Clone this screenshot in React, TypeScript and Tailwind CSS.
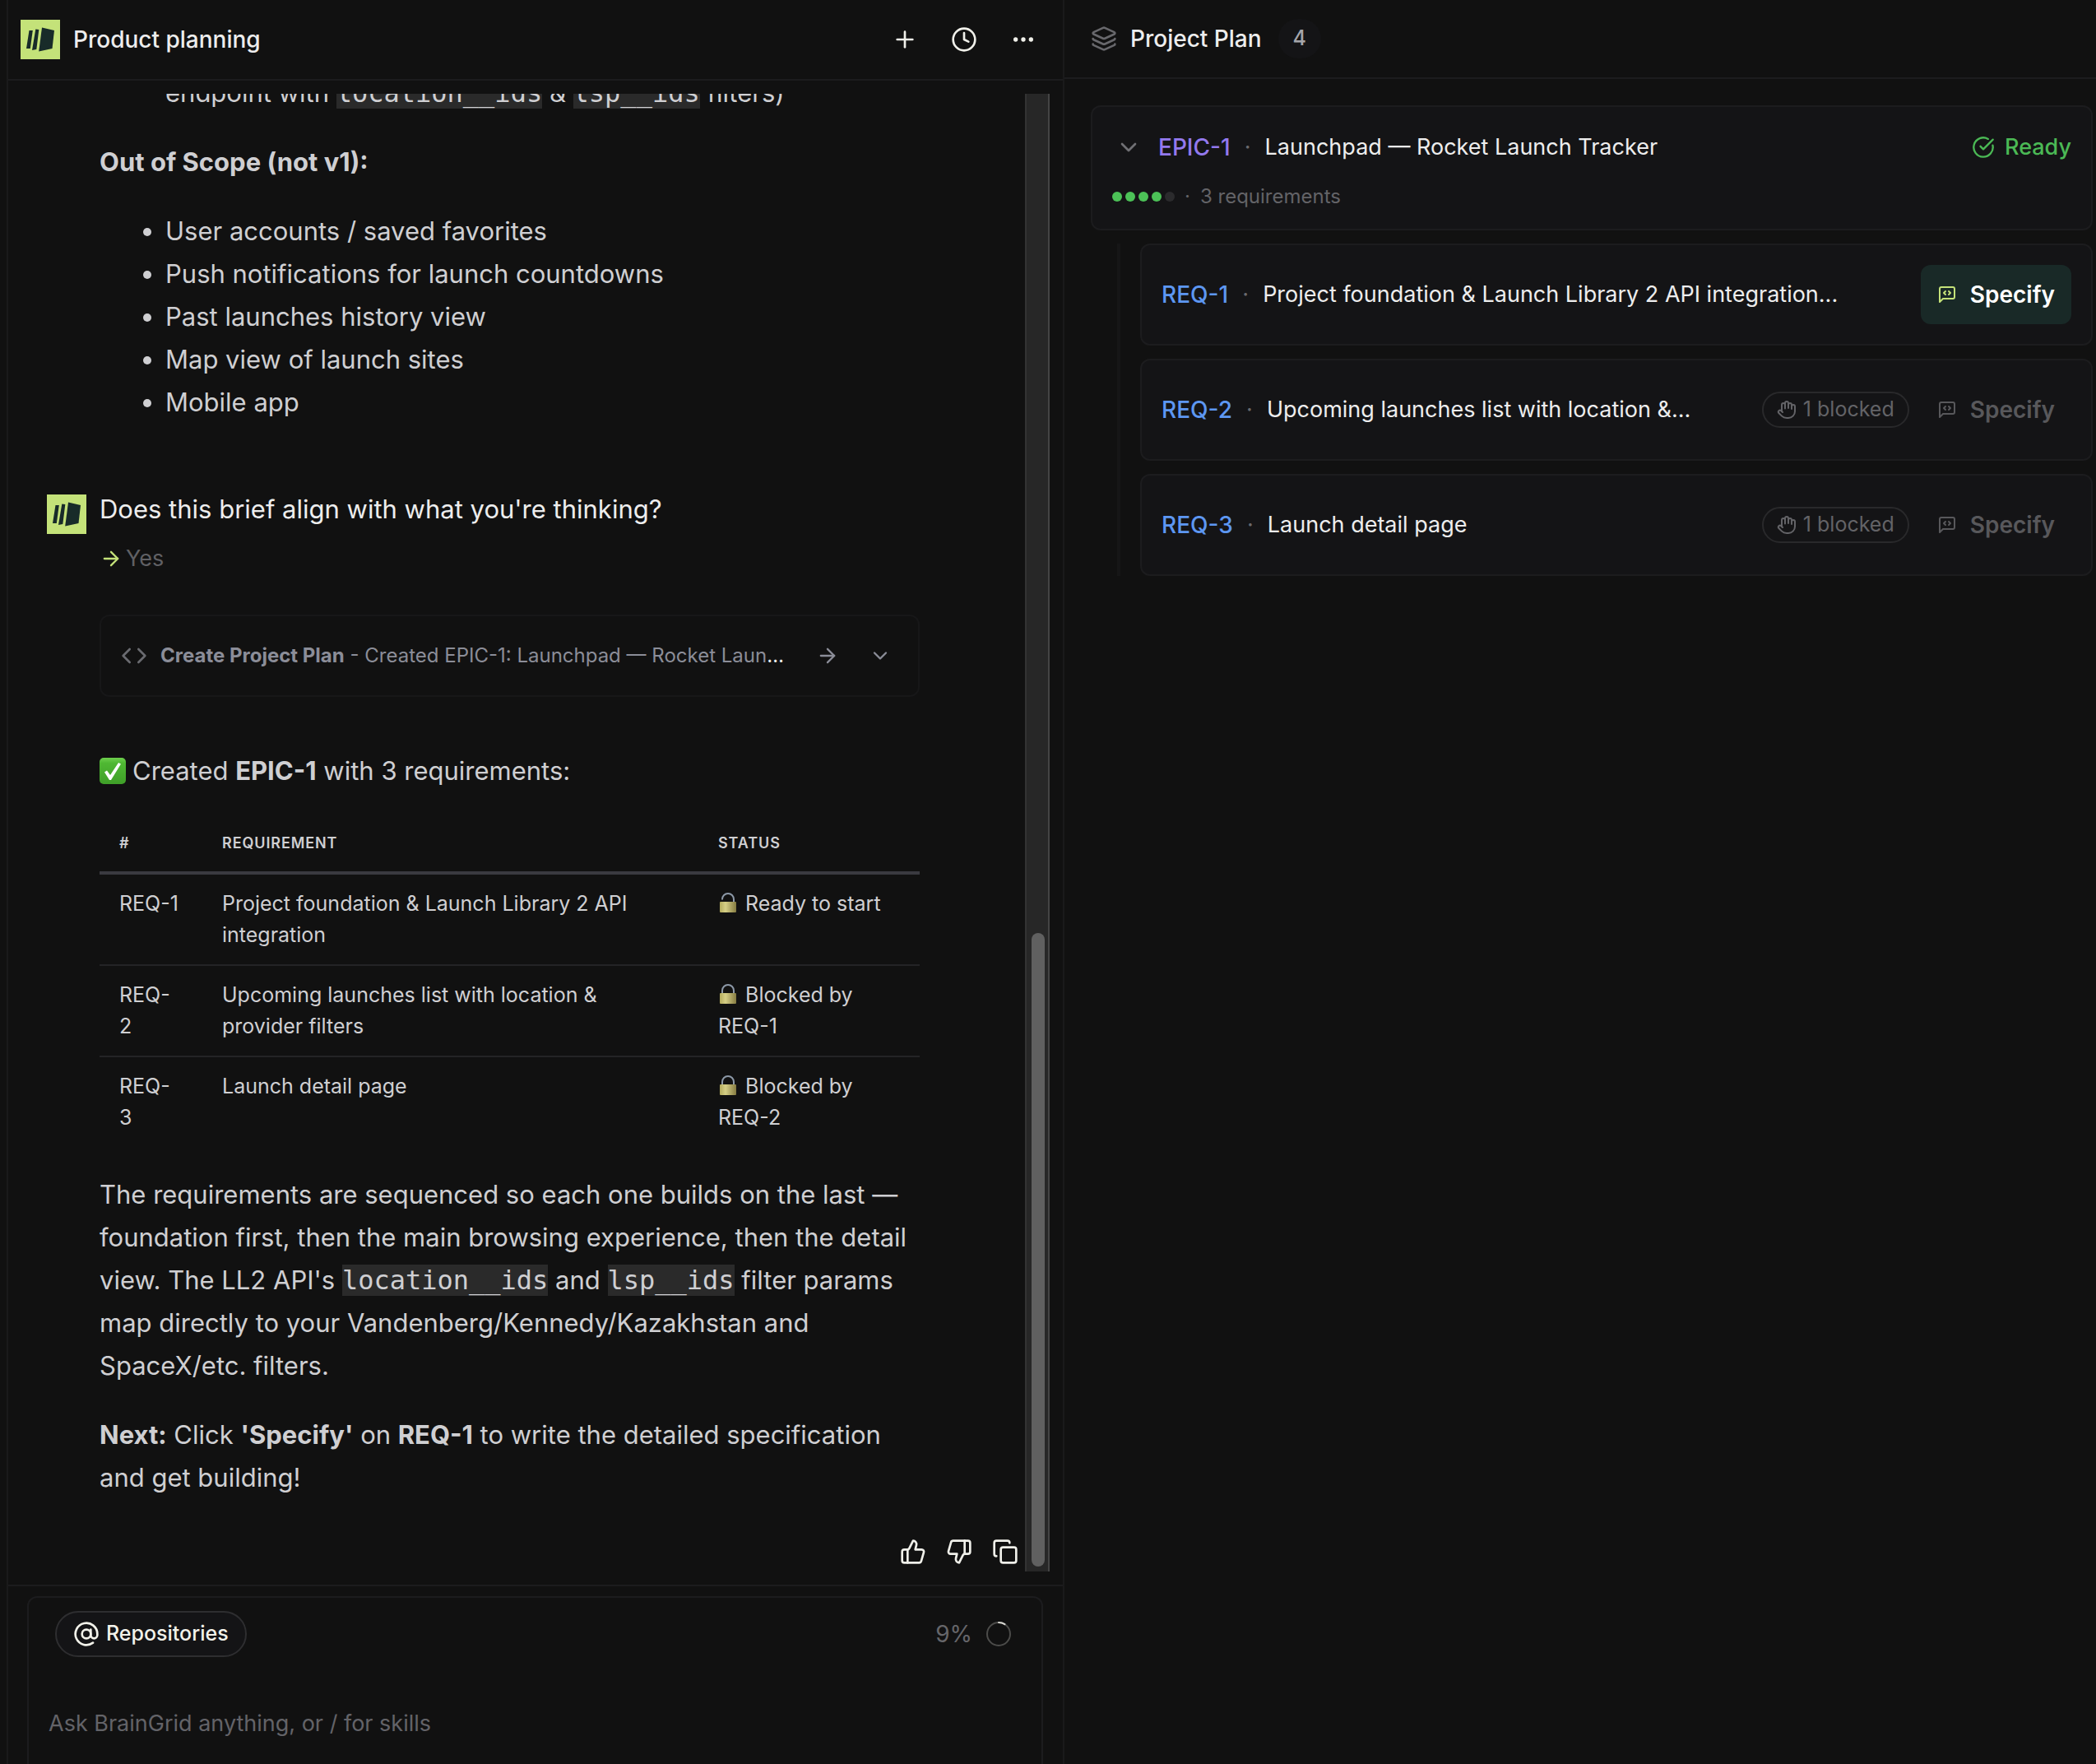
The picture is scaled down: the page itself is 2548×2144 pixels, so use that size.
import type { ReactNode } from "react";
import {
  ArrowRight,
  AtSign,
  ChevronDown,
  CircleCheckBig,
  Clock,
  Code,
  Copy,
  Ellipsis,
  Hand,
  Layers,
  Plus,
  ThumbsDown,
  ThumbsUp,
} from "lucide-react";

const outOfScope = [
  "User accounts / saved favorites",
  "Push notifications for launch countdowns",
  "Past launches history view",
  "Map view of launch sites",
  "Mobile app",
];

const tableRows = [
  { id: "REQ-1", title: "Project foundation & Launch Library 2 API integration", status: "Ready to start", open: true },
  { id: "REQ-2", title: "Upcoming launches list with location & provider filters", status: "Blocked by REQ-1", open: false },
  { id: "REQ-3", title: "Launch detail page", status: "Blocked by REQ-2", open: false },
];

const requirements = [
  { id: "REQ-1", title: "Project foundation & Launch Library 2 API integration...", blocked: 0 },
  { id: "REQ-2", title: "Upcoming launches list with location &...", blocked: 1 },
  { id: "REQ-3", title: "Launch detail page", blocked: 1 },
];

export default function App() {
  return (
    <div className="grid h-screen grid-cols-[647fr_627fr] overflow-hidden bg-[#111111] font-['Inter',sans-serif] text-[#ededed]">
      <ChatPanel />
      <PlanPanel />
    </div>
  );
}

function ChatPanel() {
  return (
    <div className="flex min-h-0 min-w-0 pl-2">
      <section className="flex min-w-0 flex-1 flex-col border-x-2 border-[#1a1a1b]">
        <header className="flex h-[98px] shrink-0 items-center border-b-2 border-[#1c1c1e] pr-8 pl-[15px]">
          <Logo />
          <h1 className="ml-4 flex-1 text-[28px] font-medium">Product planning</h1>
          <div className="flex items-center gap-10">
            <IconButton label="New chat"><Plus className="size-8" /></IconButton>
            <IconButton label="History"><Clock className="size-8" /></IconButton>
            <IconButton label="More"><Ellipsis className="size-8" /></IconButton>
          </div>
        </header>

        <div className="my-4 mr-4 flex min-h-0 flex-1">
          <div className="flex min-w-0 flex-1 flex-col justify-end overflow-hidden">
            <Messages />
          </div>
          <div className="flex w-[30px] shrink-0 flex-col justify-end border-x-2 border-l-[#333333] border-r-[#444444] bg-[#272727] pr-1 pb-1.5 pl-1.5">
            <div className="h-[43%] rounded-full bg-[#606060]" />
          </div>
        </div>

        <Composer />
      </section>
    </div>
  );
}

function Messages() {
  return (
    <div className="flex flex-col text-[31px] leading-[52px] text-[#cfcfd2]">
      <div className="flex flex-col gap-8 pr-[129px] pl-[111px]">
        <p className="pl-20">
          endpoint with <Mono>location__ids</Mono> &amp; <Mono>lsp__ids</Mono> filters)
        </p>
        <p className="font-bold">Out of Scope (not v1):</p>
        <ul className="list-disc pl-20">
          {outOfScope.map((item) => (
            <li key={item}>{item}</li>
          ))}
        </ul>
      </div>

      <div className="mt-[78px] flex gap-4 pl-[47px]">
        <div className="pt-2">
          <Logo />
        </div>
        <div>
          <p className="text-[#ededed]">Does this brief align with what you're thinking?</p>
          <p className="mt-3 flex items-center gap-1 text-[27px] leading-[44px] text-[#606064]">
            <ArrowRight className="size-7 text-[#c4e279]" />
            Yes
          </p>
        </div>
      </div>

      <div className="mt-[46px] pr-32 pl-[111px]">
        <div className="flex h-[100px] items-center rounded-xl border-2 border-[#171718] px-6 text-[24px] text-[#8b8d98]">
          <Code className="size-8 shrink-0 text-[#6a6b70]" />
          <p className="ml-4 min-w-0 flex-1 truncate text-[#ededed]">
            <span className="text-[#8b8d98]">
              <b className="font-bold">Create Project Plan</b> - Created EPIC-1: Launchpad — Rocket Launch Tracker
            </span>
          </p>
          <button aria-label="Open plan" className="ml-7"><ArrowRight className="size-7" /></button>
          <button aria-label="Expand" className="mr-2 ml-9"><ChevronDown className="size-7" /></button>
        </div>

        <p className="mt-16 flex items-center gap-2">
          <CheckMark />
          <span>
            Created <b className="font-bold">EPIC-1</b> with 3 requirements:
          </span>
        </p>

        <RequirementTable />

        <p className="mt-8">
          The requirements are sequenced so each one builds on the last — foundation first, then the main browsing
          experience, then the detail view. The LL2 API's <Mono>location__ids</Mono> and <Mono>lsp__ids</Mono> filter
          params map directly to your Vandenberg/Kennedy/Kazakhstan and SpaceX/etc. filters.
        </p>
        <p className="mt-8">
          <b className="font-bold">Next:</b> Click <b className="font-bold">'Specify'</b> on{" "}
          <b className="font-bold">REQ-1</b> to write the detailed specification and get building!
        </p>
      </div>

      <div className="mt-12 mb-2 flex justify-end gap-6 pr-2">
        <IconButton label="Good response"><ThumbsUp className="size-8" /></IconButton>
        <IconButton label="Bad response"><ThumbsDown className="size-8" /></IconButton>
        <IconButton label="Copy"><Copy className="size-8" /></IconButton>
      </div>
    </div>
  );
}

function RequirementTable() {
  return (
    <table className="mt-8 w-full table-fixed text-left text-[25px] leading-[38px]">
      <thead>
        <tr className="border-b-4 border-[#3a3a40] text-[18px] leading-7 tracking-wider uppercase">
          <th className="w-[125px] px-6 pt-4 pb-5 font-semibold">#</th>
          <th className="px-6 pt-4 pb-5 font-semibold">Requirement</th>
          <th className="w-[269px] px-6 pt-4 pb-5 font-semibold">Status</th>
        </tr>
      </thead>
      <tbody>
        {tableRows.map((row) => (
          <tr key={row.id} className="border-b-2 border-[#242426] align-top last:border-b-0">
            <td className="pt-4 pr-[26px] pb-[17px] pl-6">{row.id}</td>
            <td className="px-6 pt-4 pb-[17px]">{row.title}</td>
            <td className="px-6 pt-4 pb-[17px]">
              <Padlock open={row.open} /> {row.status}
            </td>
          </tr>
        ))}
      </tbody>
    </table>
  );
}

function Composer() {
  return (
    <div className="shrink-0 border-t-2 border-[#1c1c1e] pt-3 pr-6 pl-[23px]">
      <div className="h-[204px] rounded-t-xl border-2 border-b-0 border-[#1c1c1e] px-6 pt-4">
        <div className="flex items-center justify-between pr-3 pl-2">
          <button className="flex h-14 items-center gap-2 rounded-full border-2 border-[#2e2e30] bg-[#141416] px-5 text-[25px] font-medium text-[#f2f2ea]">
            <AtSign className="size-8" />
            Repositories
          </button>
          <div className="flex items-center gap-4 text-[28px] text-[#66666a]">
            9%
            <svg viewBox="0 0 32 32" className="size-8 -rotate-90" fill="none" strokeWidth="2">
              <circle cx="16" cy="16" r="14" stroke="#4c4c4a" />
              <circle cx="16" cy="16" r="14" stroke="#d8d8d2" pathLength="100" strokeDasharray="9 91" strokeLinecap="round" />
            </svg>
          </div>
        </div>
        <input
          aria-label="Message"
          placeholder="Ask BrainGrid anything, or / for skills"
          className="mt-14 w-full bg-transparent text-[27px] leading-[50px] outline-none placeholder:text-[#636368]"
        />
      </div>
    </div>
  );
}

function PlanPanel() {
  return (
    <section className="flex min-w-0 flex-col">
      <header className="flex h-24 shrink-0 items-center border-b-2 border-[#1c1c1e] pl-8">
        <Layers className="size-8 text-[#68686c]" />
        <h2 className="ml-4 text-[28px] font-medium">Project Plan</h2>
        <span className="ml-5 flex h-12 w-[52px] items-center justify-center rounded-full bg-[#141416] text-[25px] font-medium text-[#a5a5aa]">
          4
        </span>
      </header>

      <div className="flex flex-col gap-4 pt-8 pr-1 pl-8 text-[27px]">
        <div className="rounded-xl border-2 border-[#1c1c1e] bg-[#141416] px-6 pt-[23px] pb-[21px]">
          <div className="flex h-[52px] items-center">
            <button aria-label="Collapse" className="ml-1"><ChevronDown className="size-8 text-[#707074]" /></button>
            <a href="#epic-1" className="ml-5 text-[28px] font-medium text-[#9379ee]">EPIC-1</a>
            <Dot />
            <span className="min-w-0 flex-1 truncate">Launchpad — Rocket Launch Tracker</span>
            <span className="flex items-center gap-3 font-medium text-[#4bb955]">
              <CircleCheckBig className="size-7" />
              Ready
            </span>
          </div>
          <div className="mt-4 flex h-9 items-center text-[24px] text-[#636367]">
            <div className="flex gap-1">
              {[1, 2, 3, 4, 5].map((n) => (
                <span key={n} className={`size-3 rounded-full ${n < 5 ? "bg-[#4cc257]" : "bg-[#2b2b2d]"}`} />
              ))}
            </div>
            <span className="mx-3">·</span>
            3 requirements
          </div>
        </div>

        <div className="ml-8 flex flex-col gap-4 border-l-4 border-[#161617] pl-6">
          {requirements.map((req) => (
            <div
              key={req.id}
              className="flex h-[124px] items-center rounded-xl border-2 border-[#1c1c1e] bg-[#141416] px-6"
            >
              <a href={`#${req.id.toLowerCase()}`} className="text-[28px] font-medium text-[#5d97f2]">{req.id}</a>
              <Dot />
              <span className="min-w-0 flex-1 truncate">{req.title}</span>
              {req.blocked > 0 && (
                <span className="mr-[14px] flex h-11 items-center gap-2 rounded-full border-2 border-[#29292b] px-4 text-[25px] text-[#636367]">
                  <Hand className="size-6" />
                  {req.blocked} blocked
                </span>
              )}
              <button
                disabled={req.blocked > 0}
                className={`flex h-[72px] items-center gap-4 rounded-xl px-5 text-[28px] font-semibold ${
                  req.blocked > 0 ? "text-[#58585b]" : "bg-[#192927] text-white"
                }`}
              >
                <SpecIcon active={req.blocked === 0} />
                Specify
              </button>
            </div>
          ))}
        </div>
      </div>
    </section>
  );
}

function IconButton({ label, children }: { label: string; children: ReactNode }) {
  return (
    <button aria-label={label} className="text-[#f0f0ea]">
      {children}
    </button>
  );
}

function Mono({ children }: { children: ReactNode }) {
  return (
    <code className="bg-[#2a2a2a] font-['DejaVu_Sans_Mono',monospace] text-[32px] leading-none">{children}</code>
  );
}

function Dot() {
  return <span className="w-[42px] shrink-0 text-center text-[#6a6a6e]">·</span>;
}

function Logo() {
  return (
    <svg viewBox="0 0 48 48" className="size-12 shrink-0">
      <rect width="48" height="48" fill="#c4e279" />
      <g fill="#182b29">
        <path d="M10.500 13h4.300l-3 22H7z" />
        <path d="M18.300 11.500l4 .5-3 24-5.300 1z" />
        <path d="M26 9.500 41 13l-2.500 22-16.300 3.500z" />
      </g>
    </svg>
  );
}

function SpecIcon({ active }: { active: boolean }) {
  return (
    <svg
      viewBox="0 0 24 24"
      className={`size-6 ${active ? "text-[#c4e279]" : ""}`}
      fill="none"
      stroke="currentColor"
      strokeWidth="2"
      strokeLinecap="round"
      strokeLinejoin="round"
    >
      <path d="M21 15a2 2 0 0 1-2 2H7l-4 4V5a2 2 0 0 1 2-2h14a2 2 0 0 1 2 2z" />
      <path d="m10 8-2 2 2 2" />
      <path d="m14 8 2 2-2 2" />
    </svg>
  );
}

function CheckMark() {
  return (
    <svg viewBox="0 0 32 32" className="size-8 shrink-0">
      <defs>
        <linearGradient id="check-fill" x1="0" y1="0" x2="0" y2="1">
          <stop offset="0" stopColor="#6fd04e" />
          <stop offset="0.2" stopColor="#4fb833" />
          <stop offset="1" stopColor="#3f9f28" />
        </linearGradient>
      </defs>
      <rect width="32" height="32" rx="5" fill="url(#check-fill)" />
      <path d="M6 17.500 9 15.500l4 5.500L23 6l3 1.500L14 27h-2z" fill="#ffffff" />
    </svg>
  );
}

function Padlock({ open }: { open: boolean }) {
  return (
    <svg viewBox="0 0 24 26" className="mr-0.5 inline h-[26px] w-6 align-[-3px]">
      <defs>
        <linearGradient id="lock-fill" x1="0" y1="0" x2="1" y2="0">
          <stop offset="0" stopColor="#b3ab5c" />
          <stop offset="0.35" stopColor="#d6cf86" />
          <stop offset="1" stopColor="#857b41" />
        </linearGradient>
      </defs>
      <path
        d={open ? "M5 9.500V9a7 7 0 0 1 14 0v4" : "M5 13V9a7 7 0 0 1 14 0v4"}
        fill="none"
        stroke="#8d99a8"
        strokeWidth="2"
      />
      <rect x="2" y="12" width="20" height="13" rx="1" fill="url(#lock-fill)" />
    </svg>
  );
}
